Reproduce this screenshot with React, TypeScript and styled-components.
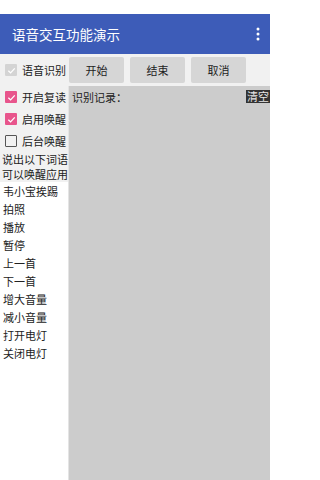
import styled, { createGlobalStyle } from "styled-components"

const GlobalStyle = createGlobalStyle`
  html, body {
    margin: 0;
    padding: 0;
    background: #ffffff;
  }
  body {
    font-family: "Noto Sans CJK SC", "Noto Sans", sans-serif;
  }
`

const Screen = styled.div`
  width: 270px;
  height: 480px;
  display: flex;
  flex-direction: column;
  overflow: hidden;
`

const StatusBar = styled.div`
  height: 14px;
  background: #ffffff;
`

const AppBar = styled.div`
  height: 40px;
  background: #3d5cb8;
  display: flex;
  align-items: center;
  justify-content: space-between;
  padding: 0 10px 0 12px;
  color: #ffffff;
`

const Title = styled.div`
  font-size: 13.5px;
  line-height: 18px;
`

const Content = styled.div`
  flex: 1;
  display: flex;
  flex-direction: column;
  background: #f1f1f1;
  min-height: 0;
`

const TopRow = styled.div`
  height: 32px;
  display: flex;
  align-items: center;
`

const CheckLabel = styled.label`
  width: 68px;
  display: flex;
  align-items: center;
  gap: 5px;
  padding-left: 5px;
  box-sizing: border-box;
  font-size: 11px;
  color: ${p => (p.$muted ? "#333333" : "#222222")};
`

const Box = styled.span<{ $state: "on" | "off" | "disabled" }>`
  width: 12px;
  height: 12px;
  box-sizing: border-box;
  border-radius: 1px;
  flex: none;
  display: flex;
  align-items: center;
  justify-content: center;
  background: ${p => (p.$state === "on" ? "#e8558c" : p.$state === "disabled" ? "#d4d4d4" : "transparent")};
  border: ${p => (p.$state === "off" ? "1.5px solid #555555" : "none")};
`

const Buttons = styled.div`
  display: flex;
  gap: 6px;
  padding-left: 1px;
`

const Button = styled.button`
  width: 55px;
  height: 26px;
  border: none;
  border-radius: 2px;
  background: #d6d6d6;
  color: #222222;
  font-family: inherit;
  font-size: 11px;
  padding: 0;
`

const Body = styled.div`
  flex: 1;
  display: flex;
  min-height: 0;
`

const LeftCol = styled.div`
  width: 68px;
  display: flex;
  flex-direction: column;
`

const OptionRow = styled(CheckLabel)`
  height: 22px;
`

const Hint = styled.div`
  font-size: 11px;
  line-height: 15px;
  color: #222222;
  padding-left: 2px;
`

const WordList = styled.ul`
  flex: 1;
  margin: 0;
  padding: 0;
  list-style: none;
  background: #ffffff;
`

const Word = styled.li`
  height: 18px;
  line-height: 18px;
  font-size: 11px;
  color: #222222;
  padding-left: 3px;
`

const Panel = styled.div`
  flex: 1;
  background: #cccccc;
  border-left: 1px solid #e4e4e4;
  display: flex;
  align-items: flex-start;
  justify-content: space-between;
  padding-left: 3px;
`

const LogLabel = styled.div`
  font-size: 11px;
  line-height: 16px;
  margin-top: 3px;
  color: #222222;
`

const ClearTag = styled.div`
  margin-top: 4px;
  background: #333333;
  color: #e6e6e6;
  font-size: 11px;
  line-height: 13px;
  padding: 0 1px;
`

function Check({ state }: { state: "on" | "off" | "disabled" }) {
  return (
    <Box $state={state}>
      {state !== "off" && (
        <svg width="9" height="9" viewBox="0 0 10 10">
          <path d="M1.5 5.2 L4 7.6 L8.6 2.6" fill="none" stroke="#ffffff" strokeWidth="1.4" />
        </svg>
      )}
    </Box>
  )
}

const words = ["韦小宝挨踢", "拍照", "播放", "暂停", "上一首", "下一首", "增大音量", "减小音量", "打开电灯", "关闭电灯"]

export default function App() {
  return (
    <Screen>
      <GlobalStyle />
      <StatusBar />
      <AppBar>
        <Title>语音交互功能演示</Title>
        <svg width="4" height="14" viewBox="0 0 4 14">
          <circle cx="2" cy="2" r="1.5" fill="#ffffff" />
          <circle cx="2" cy="7" r="1.5" fill="#ffffff" />
          <circle cx="2" cy="12" r="1.5" fill="#ffffff" />
        </svg>
      </AppBar>
      <Content>
        <TopRow>
          <CheckLabel>
            <Check state="disabled" />
            语音识别
          </CheckLabel>
          <Buttons>
            <Button>开始</Button>
            <Button>结束</Button>
            <Button>取消</Button>
          </Buttons>
        </TopRow>
        <Body>
          <LeftCol>
            <OptionRow>
              <Check state="on" />
              开启复读
            </OptionRow>
            <OptionRow>
              <Check state="on" />
              启用唤醒
            </OptionRow>
            <OptionRow>
              <Check state="off" />
              后台唤醒
            </OptionRow>
            <Hint>
              说出以下词语
              <br />
              可以唤醒应用
            </Hint>
            <WordList>
              {words.map(w => (
                <Word key={w}>{w}</Word>
              ))}
            </WordList>
          </LeftCol>
          <Panel>
            <LogLabel>识别记录：</LogLabel>
            <ClearTag>清空</ClearTag>
          </Panel>
        </Body>
      </Content>
    </Screen>
  )
}
